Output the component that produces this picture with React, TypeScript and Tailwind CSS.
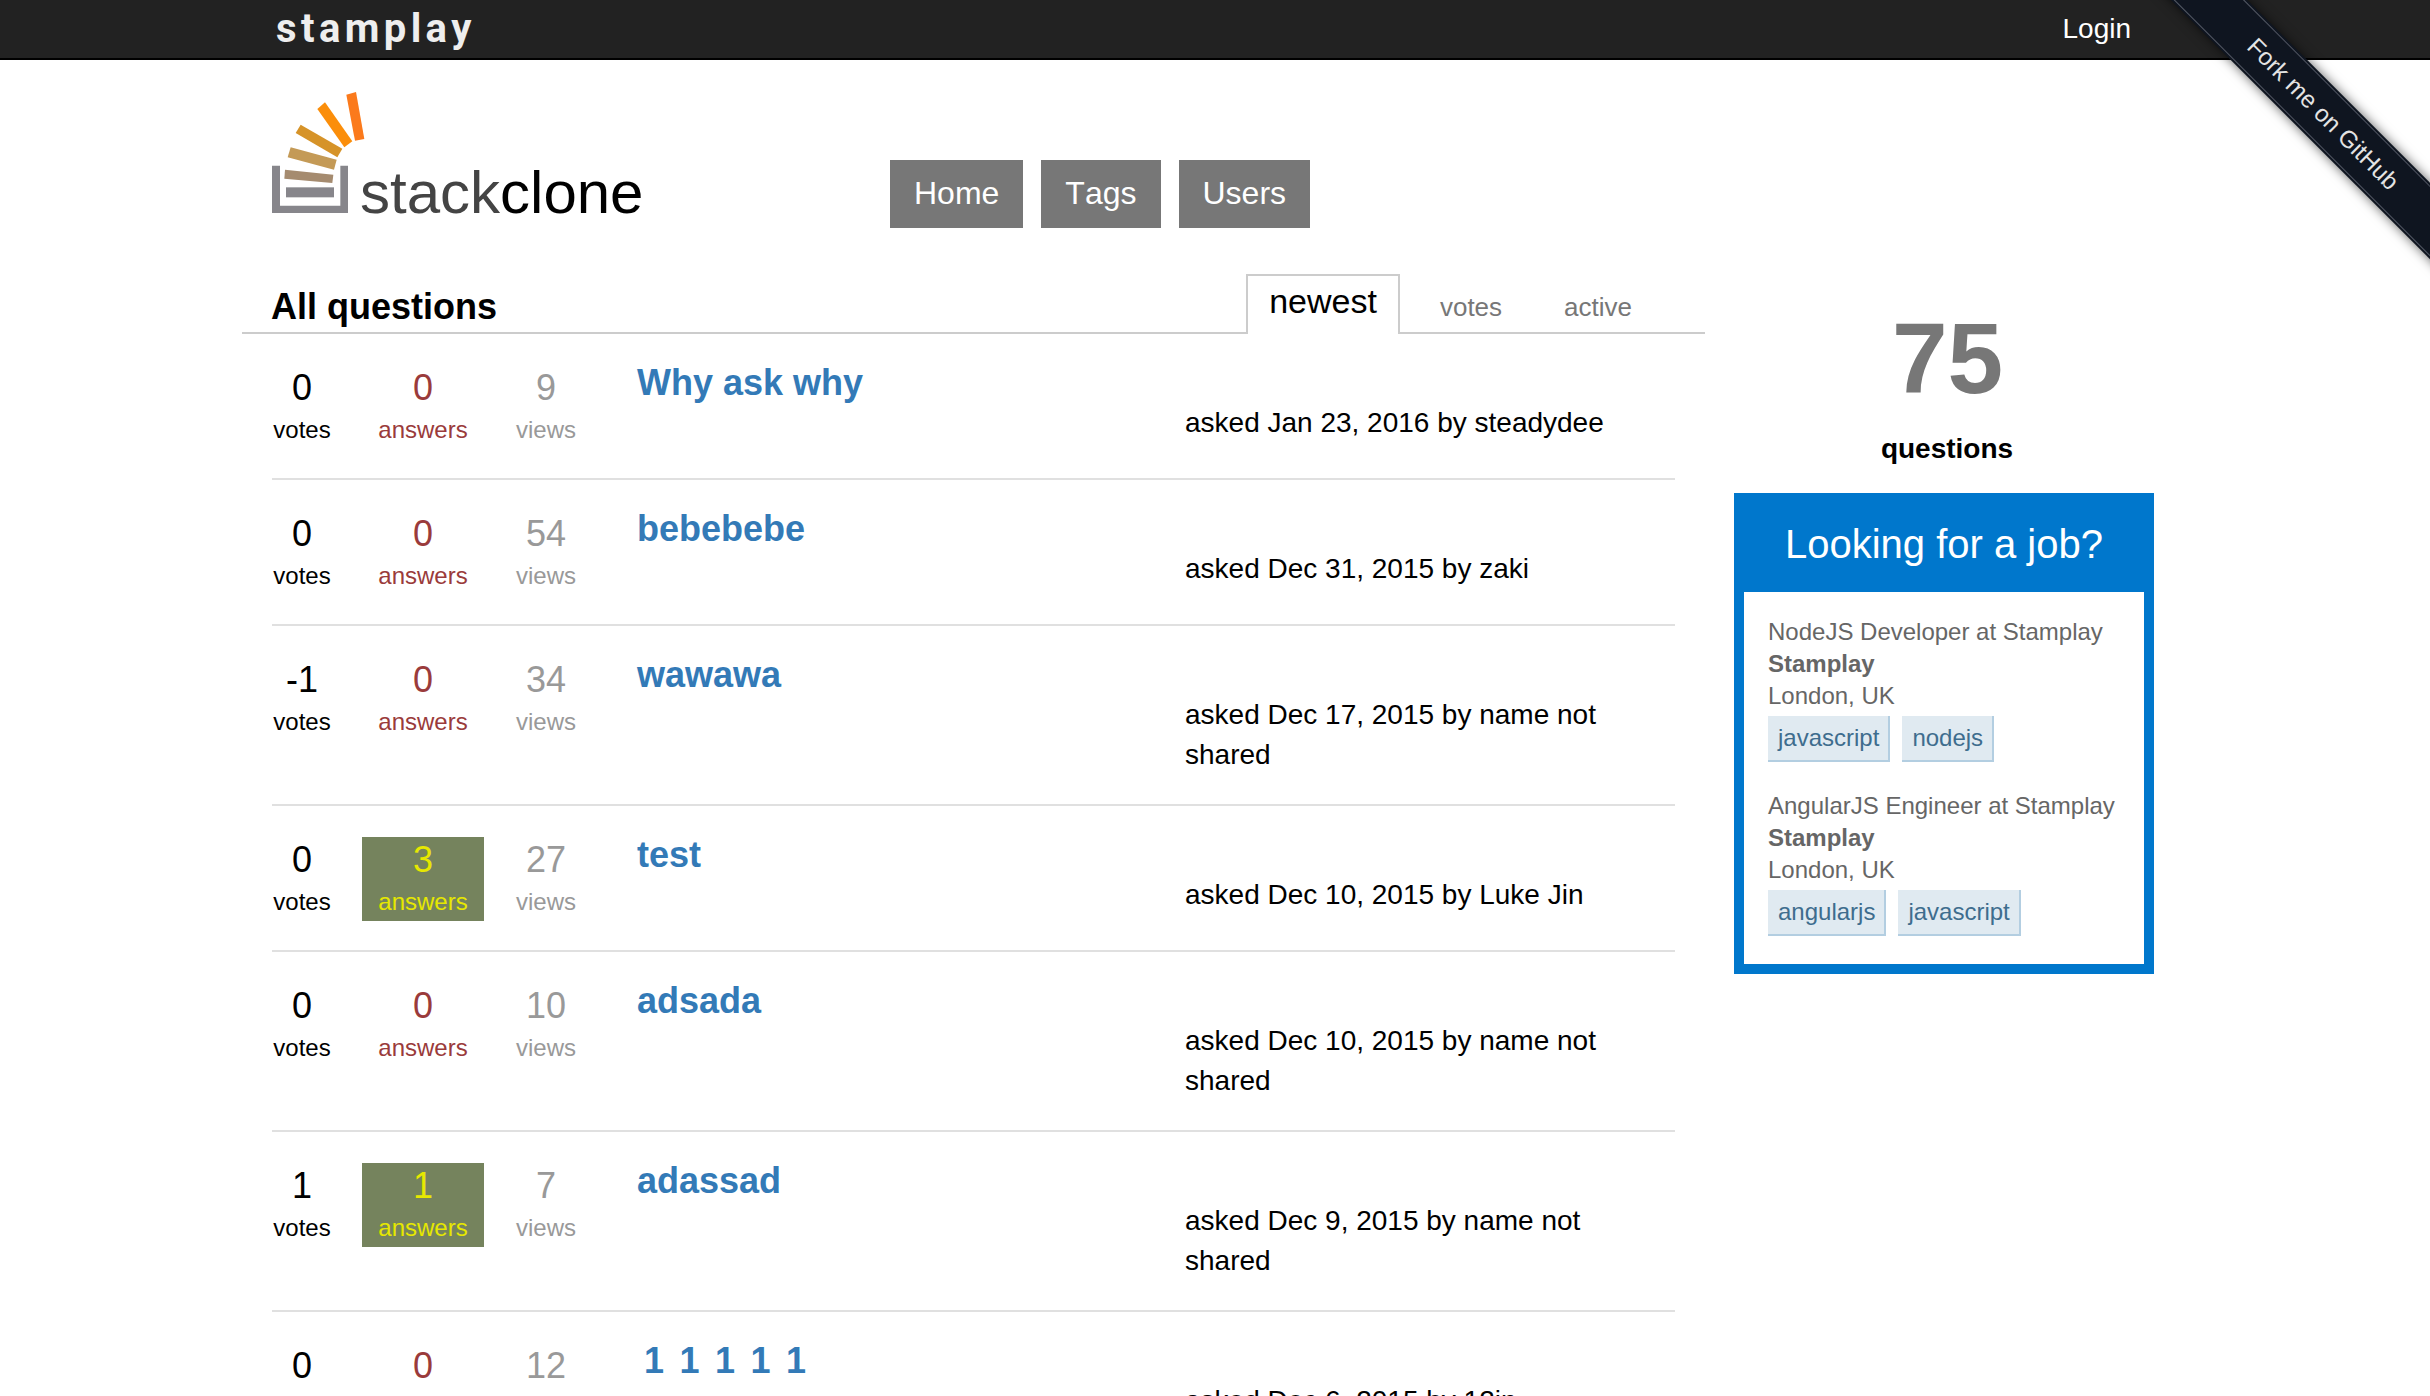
import React from 'react';

const questions = [
  { id: 1, votes: 0, answers: 0, views: 9, title: 'Why ask why', asked: 'asked Jan 23, 2016 by steadydee' },
  { id: 2, votes: 0, answers: 0, views: 54, title: 'bebebebe', asked: 'asked Dec 31, 2015 by zaki' },
  { id: 3, votes: -1, answers: 0, views: 34, title: 'wawawa', asked: 'asked Dec 17, 2015 by name not shared' },
  { id: 4, votes: 0, answers: 3, views: 27, title: 'test', asked: 'asked Dec 10, 2015 by Luke Jin' },
  { id: 5, votes: 0, answers: 0, views: 10, title: 'adsada', asked: 'asked Dec 10, 2015 by name not shared' },
  { id: 6, votes: 1, answers: 1, views: 7, title: 'adassad', asked: 'asked Dec 9, 2015 by name not shared' },
  { id: 7, votes: 0, answers: 0, views: 12, title: '1 1 1 1 1', asked: 'asked Dec 6, 2015 by 12in' },
];

const jobs = [
  { title: 'NodeJS Developer at Stamplay', tags: ['javascript', 'nodejs'] },
  { title: 'AngularJS Engineer at Stamplay', tags: ['angularjs', 'javascript'] },
];

const Logo = () => (
  <svg width="76" height="121" viewBox="36 37 228 363" className="shrink-0 overflow-visible">
    <path d="M36 258 H60 V378 H241 V258 H264 V400 H36 Z" fill="#87868b" />
    <rect x="78" y="323" width="144" height="30" fill="#87868b" />
    <polygon points="75,270 220,285 217,310 73,297" fill="#a58b6f" />
    <polygon points="92,203 230,240 222,270 83,233" fill="#c49a56" />
    <polygon points="122,135 247,207 232,233 107,160" fill="#d69328" />
    <polygon points="195,68 277,185 253,203 172,88" fill="#fb8e0a" />
    <polygon points="288,37 313,178 285,183 259,45" fill="#fb7a1c" />
  </svg>
);

export default function App() {
  return (
    <div className="relative h-screen overflow-hidden bg-white text-[28px] leading-[40px] text-black font-['Liberation_Sans',Arial,sans-serif]">
      <header className="flex h-[60px] items-center justify-between border-b-2 border-black bg-[#222222] pl-[276px] pr-[299px]">
        <span className="font-['Roboto',sans-serif] text-[40px] font-bold tracking-[4.4px] text-[#eeeeee]">stamplay</span>
        <span className="text-white">Login</span>
      </header>

      <div className="absolute -right-[143px] top-[87px] h-[54px] w-[500px] rotate-45 bg-[#0f1520] p-[2px] shadow-[0_0_12px_rgba(0,0,0,0.6)]">
        <div className="flex h-full items-center justify-center border-y border-[#555a66] text-[24px] text-[#e4e4e4]">
          Fork me on GitHub
        </div>
      </div>

      <div className="flex h-[214px] items-start pl-[272px]">
        <div className="mt-[32px] flex w-[618px] items-end">
          <Logo />
          <span className="-mb-[16px] ml-[12px] text-[60px] leading-[72px] text-[#444444]">stack<span className="text-black">clone</span></span>
        </div>
        <nav className="mt-[100px] flex gap-[18px] [font-kerning:none]">
          {['Home', 'Tags', 'Users'].map((item) => (
            <a key={item} className="flex h-[68px] items-center bg-[#777777] px-[24px] pb-[2px] text-[32px] text-white">{item}</a>
          ))}
        </nav>
      </div>

      <div className="flex pl-[242px]">
        <main className="w-[1463px] shrink-0">
          <div className="flex h-[60px] items-end justify-between border-b-2 border-[#cccccc] pl-[29px] pr-[73px]">
            <h1 className="text-[36px] font-bold leading-[50px]">All questions</h1>
            <div className="flex items-end text-[26px]">
              <span className="-mb-[2px] mr-[40px] flex h-[60px] items-center border-2 border-b-0 border-[#cccccc] bg-white px-[21px] pb-[8px] text-[34px]">newest</span>
              <span className="mb-[5px] mr-[62px] text-[#777777]">votes</span>
              <span className="mb-[5px] text-[#777777]">active</span>
            </div>
          </div>
          <div className="px-[30px]">
            {questions.map((q) => (
              <article key={q.id} className="flex items-start border-b-2 border-[#e0e0e0] pb-[29px] pt-[31px] last:border-b-0">
                <div className="mr-[30px] w-[60px] shrink-0 text-center">
                  <div className="text-[36px] leading-[46px]">{q.votes}</div>
                  <div className="text-[24px] leading-[38px]">votes</div>
                </div>
                <div className={q.answers > 0 ? 'w-[122px] shrink-0 bg-[#75835d] text-center text-[#e6e800]' : 'w-[122px] shrink-0 text-center text-[#9a3b3b]'}>
                  <div className="text-[36px] leading-[46px]">{q.answers}</div>
                  <div className="text-[24px] leading-[38px]">answers</div>
                </div>
                <div className="w-[124px] shrink-0 text-center text-[#999999]">
                  <div className="text-[36px] leading-[46px]">{q.views}</div>
                  <div className="text-[24px] leading-[38px]">views</div>
                </div>
                <h2 className={q.id === 7 ? '-mt-[7px] ml-[29px] w-[548px] shrink-0 pl-[7px] text-[36px] font-bold leading-[50px] text-[#337ab7] [word-spacing:5.5px]' : '-mt-[7px] ml-[29px] w-[548px] shrink-0 text-[36px] font-bold leading-[50px] text-[#337ab7]'}>
                  {q.title}
                </h2>
                <p className="mt-[38px] w-[460px]">{q.asked}</p>
              </article>
            ))}
          </div>
        </main>

        <aside className="ml-[29px] w-[420px]">
          <div className="mt-[34px] pl-[7px] text-center text-[100px] font-bold leading-[100px] text-[#777777]">75</div>
          <div className="mt-[21px] pl-[6px] text-center font-bold">questions</div>
          <section className="mt-[24px] bg-[#0077cc] p-[10px]">
            <h3 className="flex h-[89px] items-start justify-center pt-[13px] text-[40px] leading-[56px] text-white">Looking for a job?</h3>
            <div className="bg-white px-[24px] pb-[28px] pt-[24px] text-[24px] leading-[32px] text-[#666666]">
              {jobs.map((job) => (
                <div key={job.title} className="mb-[28px] last:mb-0">
                  <div>{job.title}</div>
                  <div className="font-bold">Stamplay</div>
                  <div>London, UK</div>
                  <div className="mt-[4px] flex gap-[12px]">
                    {job.tags.map((tag) => (
                      <span key={tag} className="flex h-[46px] items-center border-b-2 border-r-2 border-[#b3cee1] bg-[#e0eaf1] pl-[10px] pr-[9px] text-[#3e6d8e]">{tag}</span>
                    ))}
                  </div>
                </div>
              ))}
            </div>
          </section>
        </aside>
      </div>
    </div>
  );
}
